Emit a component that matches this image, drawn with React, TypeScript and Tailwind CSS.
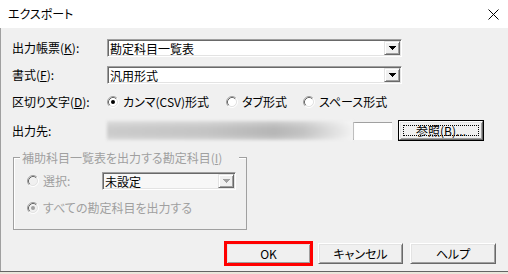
import React from "react";

function Radio({ checked, disabled }: { checked?: boolean; disabled?: boolean }) {
  return (
    <svg width="12" height="12" viewBox="0 0 12 12" className="shrink-0">
      <circle cx="6" cy="6" r="4.2" fill={disabled ? "#f0f0f0" : "#ffffff"} />
      <path d="M2.11 9.89 A5.5 5.5 0 0 1 9.89 2.11" fill="none" stroke="#a0a0a0" strokeWidth="1" />
      <path d="M9.89 2.11 A5.5 5.5 0 0 1 2.11 9.89" fill="none" stroke="#ffffff" strokeWidth="1" />
      <path d="M2.82 9.18 A4.5 4.5 0 0 1 9.18 2.82" fill="none" stroke="#696969" strokeWidth="1" />
      <path d="M9.18 2.82 A4.5 4.5 0 0 1 2.82 9.18" fill="none" stroke="#e3e3e3" strokeWidth="1" />
      {checked && <circle cx="6" cy="6" r="2" fill={disabled ? "#a0a0a0" : "#000000"} />}
    </svg>
  );
}

function Arrow({ disabled }: { disabled?: boolean }) {
  const c = disabled ? "#a0a0a0" : "#000000";
  return (
    <svg width="7" height="4" viewBox="0 0 7 4" shapeRendering="crispEdges">
      <rect x="0" y="0" width="7" height="1" fill={c} />
      <rect x="1" y="1" width="5" height="1" fill={c} />
      <rect x="2" y="2" width="3" height="1" fill={c} />
      <rect x="3" y="3" width="1" height="1" fill={c} />
    </svg>
  );
}

function Combo({ text, width, disabled }: { text: string; width: string; disabled?: boolean }) {
  return (
    <div
      className={`${width} h-[18px] flex items-stretch border border-t-[#a0a0a0] border-l-[#a0a0a0] border-r-white border-b-white shadow-[inset_1px_1px_0_#696969,inset_-1px_-1px_0_#e3e3e3] ${
        disabled ? "bg-[#f7f7f7]" : "bg-white"
      }`}
    >
      <div className="flex-1 flex items-center pl-[2px] pt-[1px] text-black">{text}</div>
      <div className="w-[16px] my-[1px] mr-[1px] flex items-center justify-center bg-[#f0f0f0] border border-t-[#e3e3e3] border-l-[#e3e3e3] border-r-[#696969] border-b-[#696969] shadow-[inset_1px_1px_0_#ffffff,inset_-1px_-1px_0_#a0a0a0]">
        <Arrow disabled={disabled} />
      </div>
    </div>
  );
}

function Button({ label, width, children }: { label: string; width: string; children?: React.ReactNode }) {
  return (
    <div
      className={`relative ${width} h-[21px] flex items-center justify-center bg-[#f0f0f0] border border-t-white border-l-white border-r-[#696969] border-b-[#696969] shadow-[inset_1px_1px_0_#e3e3e3,inset_-1px_-1px_0_#a0a0a0]`}
    >
      <span className="pt-[1px]">{label}</span>
      {children}
    </div>
  );
}

export default function App() {
  return (
    <div className="w-[508px] h-[274px] bg-[#f0f0f0] flex flex-col overflow-hidden text-[12px] leading-none text-black font-['Noto_Sans_CJK_JP','Noto_Sans_CJK_SC',sans-serif] [font-feature-settings:'palt']">
      {/* Title bar */}
      <div className="h-[28px] bg-white flex items-center justify-between pl-[8px] pr-[9px] shrink-0">
        <span className="text-[12px]">エクスポート</span>
        <svg width="11" height="11" viewBox="0 0 11 11">
          <path d="M0.5 0.5 L10.5 10.5 M10.5 0.5 L0.5 10.5" stroke="#000" strokeWidth="1" />
        </svg>
      </div>

      {/* Body */}
      <div className="flex-1 flex flex-col border-l border-[#a0a0a0] pl-[11px]">
        {/* Row 1 */}
        <div className="mt-[11px] h-[18px] flex items-center">
          <div className="w-[95px]">出力帳票(<span className="underline">K</span>):</div>
          <Combo text="勘定科目一覧表" width="w-[295px]" />
        </div>

        {/* Row 2 */}
        <div className="mt-[9px] h-[18px] flex items-center">
          <div className="w-[95px]">書式(<span className="underline">F</span>):</div>
          <Combo text="汎用形式" width="w-[295px]" />
        </div>

        {/* Row 3 */}
        <div className="mt-[9px] h-[18px] flex items-center">
          <div className="w-[95px]">区切り文字(<span className="underline">D</span>):</div>
          <div className="w-[119px] flex items-center gap-[4px]">
            <Radio checked />
            <span>カンマ(CSV)形式</span>
          </div>
          <div className="w-[77px] flex items-center gap-[4px]">
            <Radio />
            <span>タブ形式</span>
          </div>
          <div className="flex items-center gap-[4px]">
            <Radio />
            <span>スペース形式</span>
          </div>
        </div>

        {/* Row 4 */}
        <div className="mt-[9px] h-[21px] flex items-center">
          <div className="w-[95px]">出力先:</div>
          <div className="w-[246px] h-[19px] blur-[1.5px] bg-[linear-gradient(180deg,rgba(255,255,255,0.35),rgba(255,255,255,0)_40%,rgba(255,255,255,0)_70%,rgba(255,255,255,0.3)),linear-gradient(90deg,#cbcbcb_0%,#c4c4c4_40%,#b6b6b6_68%,#c3c3c3_80%,#f2f2f2_100%)]" />
          <div className="w-[39px] h-[18px] bg-white border-t border-l border-[#a0a0a0]" />
          <div className="ml-[6px] w-[86px] h-[21px] border border-black flex">
            <Button label="参照(B)..." width="w-full h-full">
              <span className="absolute inset-[3px] border border-dotted border-black" />
            </Button>
          </div>
        </div>

        {/* Group */}
        <div className="ml-[1px] mt-[16px] w-[234px] h-[73px] relative border border-[#a0a0a0] shadow-[inset_1px_1px_0_#ffffff] flex flex-col pl-[13px] text-[#a0a0a0]">
          <div className="absolute top-[-7px] left-[6px] w-[219px] bg-[#f0f0f0] pl-[2px] h-[13px] flex items-center">
            補助科目一覧表を出力する勘定科目(<span className="underline">I</span>)
          </div>
          <div className="mt-[14px] h-[18px] flex items-center">
            <Radio disabled />
            <div className="ml-[4px] w-[59px]">選択:</div>
            <Combo text="未設定" width="w-[134px]" disabled />
          </div>
          <div className="mt-[9px] h-[18px] flex items-center">
            <Radio checked disabled />
            <div className="ml-[4px]">すべての勘定科目を出力する</div>
          </div>
        </div>

        {/* Buttons */}
        <div className="mt-[13px] h-[21px] flex justify-end gap-[7px] pr-[12px]">
          <div className="relative w-[85px] h-[21px] flex">
            <Button label="OK" width="w-full" />
            <span className="absolute -inset-[2px] border-[3px] border-[#ff0000]" />
          </div>
          <Button label="キャンセル" width="w-[85px]" />
          <Button label="ヘルプ" width="w-[86px]" />
        </div>
      </div>

      <div className="h-[1px] bg-[#646464] shrink-0" />
      <div className="h-[2px] bg-[#ebe6dc] shrink-0" />
    </div>
  );
}
